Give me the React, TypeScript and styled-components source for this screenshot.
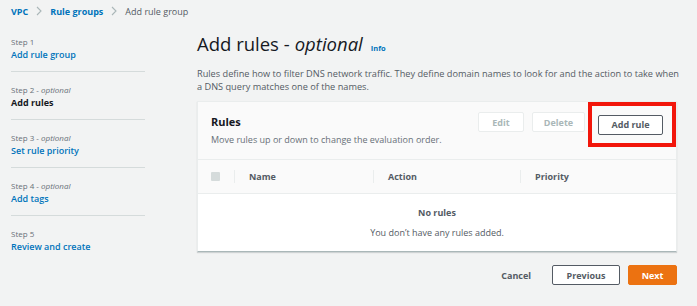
import React from 'react';
import styled, { createGlobalStyle } from 'styled-components';

const GlobalStyle = createGlobalStyle`
  html, body {
    margin: 0;
    padding: 0;
    background: #f2f3f3;
    font-family: "Open Sans", "Noto Sans", sans-serif;
    color: #16191f;
  }
  * { box-sizing: border-box; }
`;

const Page = styled.div`
  width: 697px;
  height: 306px;
  overflow: hidden;
  padding: 0 20px 0 11px;
`;

const Breadcrumbs = styled.nav`
  display: flex;
  align-items: center;
  height: 22px;
  font-size: 9px;
`;

const Crumb = styled.span<{ $current?: boolean }>`
  color: ${p => (p.$current ? '#545b64' : '#0073bb')};
  font-weight: ${p => (p.$current ? 400 : 700)};
`;

const Chevron = styled.span`
  color: #aab7b8;
  margin: 0 8px;
  display: flex;
`;

const Layout = styled.div`
  display: flex;
  gap: 52px;
  padding-top: 12px;
`;

const SideNav = styled.ol`
  list-style: none;
  margin: 0;
  padding: 0;
  width: 134px;
  flex-shrink: 0;
`;

const StepItem = styled.li`
  padding: 2px 0 9px;
  border-bottom: 1px solid #d5dbdb;
  margin-bottom: 10px;
  &:last-child {
    border-bottom: none;
  }
`;

const StepLabel = styled.div`
  font-size: 8px;
  color: #687078;
  line-height: 12px;
  em {
    font-style: italic;
  }
`;

const StepLink = styled.div<{ $active?: boolean }>`
  font-size: 9px;
  line-height: 14px;
  font-weight: ${p => (p.$active ? 700 : 600)};
  color: ${p => (p.$active ? '#16191f' : '#0073bb')};
`;

const Main = styled.main`
  flex: 1;
  min-width: 0;
`;

const Title = styled.h1`
  margin: -2px 0 0;
  font-size: 18.5px;
  font-weight: 400;
  line-height: 24px;
  display: flex;
  align-items: baseline;
  em {
    margin-left: 5px;
  }
`;

const InfoLink = styled.span`
  font-size: 7.5px;
  font-weight: 700;
  color: #0073bb;
  margin-left: 8px;
`;

const Description = styled.p`
  margin: 7px 0 8px;
  font-size: 9.2px;
  line-height: 13px;
  color: #545b64;
  white-space: nowrap;
`;

const Panel = styled.section`
  background: #fff;
  border: 1px solid #eaeded;
  border-bottom-color: #aab7b8;
  box-shadow: 0 1px 1px rgba(0, 28, 36, 0.15);
`;

const PanelHeader = styled.div`
  display: flex;
  justify-content: space-between;
  align-items: flex-start;
  background: #fafafa;
  border-bottom: 1px solid #eaeded;
  padding: 0 0 0 13px;
  height: 58px;
`;

const PanelTitle = styled.h2`
  margin: 12px 0 0;
  font-size: 11px;
  font-weight: 700;
  line-height: 16px;
`;

const PanelSub = styled.div`
  margin-top: 3px;
  font-size: 9px;
  color: #687078;
`;

const Actions = styled.div`
  display: flex;
  gap: 8px;
  align-items: flex-start;
`;

const Button = styled.button<{ $disabled?: boolean; $width: number }>`
  width: ${p => p.$width}px;
  height: 20px;
  margin-top: ${p => (p.$disabled ? 10 : 0)}px;
  border: 1px solid ${p => (p.$disabled ? '#eaeded' : '#545b64')};
  border-radius: 2px;
  background: #fff;
  color: ${p => (p.$disabled ? '#aab7b8' : '#545b64')};
  font-family: inherit;
  font-size: 9px;
  font-weight: 700;
  padding: 0;
`;

const Highlight = styled.div`
  border: 4px solid #f2160b;
  padding: 5px 9px 8px 6px;
  margin-left: -5px;
`;

const TableHead = styled.div`
  display: grid;
  grid-template-columns: 36px 139px 147px 1fr;
  align-items: center;
  height: 34px;
  background: #fafafa;
  border-bottom: 1px solid #eaeded;
  font-size: 9px;
  font-weight: 700;
  color: #545b64;
`;

const HeadCell = styled.div<{ $divider?: boolean }>`
  padding-left: 14px;
  height: 13px;
  display: flex;
  align-items: center;
  border-left: ${p => (p.$divider ? '1px solid #eaeded' : 'none')};
`;

const CheckBox = styled.span`
  width: 9px;
  height: 9px;
  margin-left: 13px;
  background: #d5dbdb;
  border-radius: 1px;
`;

const Empty = styled.div`
  height: 57px;
  display: flex;
  flex-direction: column;
  align-items: center;
  justify-content: center;
  gap: 7px;
  color: #545b64;
  font-size: 9px;
  line-height: 13px;
`;

const EmptyTitle = styled.div`
  font-weight: 700;
`;

const Footer = styled.div`
  display: flex;
  justify-content: flex-end;
  align-items: center;
  gap: 8px;
  margin-top: 13px;
`;

const LinkButton = styled.button`
  border: none;
  background: none;
  font-family: inherit;
  font-size: 9px;
  font-weight: 700;
  color: #545b64;
  padding: 0;
  margin-right: 13px;
`;

const PrimaryButton = styled.button`
  width: 49px;
  height: 20px;
  border: 1px solid #ec7211;
  border-radius: 2px;
  background: #ec7211;
  color: #fff;
  font-family: inherit;
  font-size: 9px;
  font-weight: 700;
  padding: 0;
`;

const ChevronIcon = () => (
  <svg width="6" height="10" viewBox="0 0 6 10">
    <path d="M1 1l4 4-4 4" fill="none" stroke="currentColor" strokeWidth="1.1" />
  </svg>
);

const steps = [
  { n: 1, label: 'Add rule group' },
  { n: 2, label: 'Add rules', optional: true, active: true },
  { n: 3, label: 'Set rule priority', optional: true },
  { n: 4, label: 'Add tags', optional: true },
  { n: 5, label: 'Review and create' },
];

export default function App() {
  return (
    <>
      <GlobalStyle />
      <Page>
        <Breadcrumbs>
          <Crumb>VPC</Crumb>
          <Chevron><ChevronIcon /></Chevron>
          <Crumb>Rule groups</Crumb>
          <Chevron><ChevronIcon /></Chevron>
          <Crumb $current>Add rule group</Crumb>
        </Breadcrumbs>
        <Layout>
          <SideNav>
            {steps.map(s => (
              <StepItem key={s.n}>
                <StepLabel>
                  Step {s.n}
                  {s.optional && <> - <em>optional</em></>}
                </StepLabel>
                <StepLink $active={s.active}>{s.label}</StepLink>
              </StepItem>
            ))}
          </SideNav>
          <Main>
            <Title>
              Add rules - <em>optional</em>
              <InfoLink>Info</InfoLink>
            </Title>
            <Description>
              Rules define how to filter DNS network traffic. They define domain names to look for and the action to take when
              <br />
              a DNS query matches one of the names.
            </Description>
            <Panel>
              <PanelHeader>
                <div>
                  <PanelTitle>Rules</PanelTitle>
                  <PanelSub>Move rules up or down to change the evaluation order.</PanelSub>
                </div>
                <Actions>
                  <Button $disabled $width={46}>Edit</Button>
                  <Button $disabled $width={53}>Delete</Button>
                  <Highlight>
                    <Button $width={65}>Add rule</Button>
                  </Highlight>
                </Actions>
              </PanelHeader>
              <TableHead>
                <CheckBox />
                <HeadCell $divider>Name</HeadCell>
                <HeadCell $divider>Action</HeadCell>
                <HeadCell $divider>Priority</HeadCell>
              </TableHead>
              <Empty>
                <EmptyTitle>No rules</EmptyTitle>
                <div>You don’t have any rules added.</div>
              </Empty>
            </Panel>
            <Footer>
              <LinkButton>Cancel</LinkButton>
              <Button $width={68}>Previous</Button>
              <PrimaryButton>Next</PrimaryButton>
            </Footer>
          </Main>
        </Layout>
      </Page>
    </>
  );
}
